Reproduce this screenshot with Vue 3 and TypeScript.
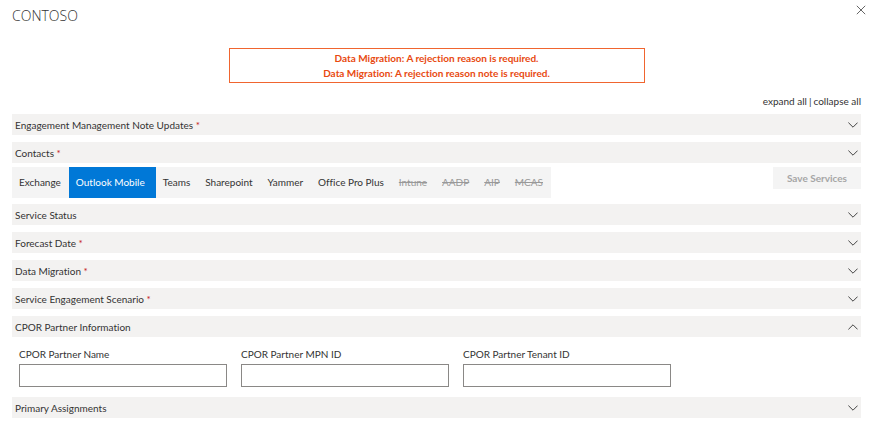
<script setup lang="ts">
import { reactive, ref } from 'vue'

interface Section {
  id: string
  title: string
  required: boolean
  open: boolean
}

interface Service {
  name: string
  disabled: boolean
}

interface Field {
  id: string
  label: string
  value: string
}

const errors: string[] = [
  'Data Migration: A rejection reason is required.',
  'Data Migration: A rejection reason note is required.',
]

const generalSections = reactive<Section[]>([
  { id: 'notes', title: 'Engagement Management Note Updates', required: true, open: false },
  { id: 'contacts', title: 'Contacts', required: true, open: false },
])

const serviceSections = reactive<Section[]>([
  { id: 'status', title: 'Service Status', required: false, open: false },
  { id: 'forecast', title: 'Forecast Date', required: true, open: false },
  { id: 'migration', title: 'Data Migration', required: true, open: false },
  { id: 'scenario', title: 'Service Engagement Scenario', required: true, open: false },
  { id: 'cpor', title: 'CPOR Partner Information', required: false, open: true },
  { id: 'assignments', title: 'Primary Assignments', required: false, open: false },
])

const services: Service[] = [
  { name: 'Exchange', disabled: false },
  { name: 'Outlook Mobile', disabled: false },
  { name: 'Teams', disabled: false },
  { name: 'Sharepoint', disabled: false },
  { name: 'Yammer', disabled: false },
  { name: 'Office Pro Plus', disabled: false },
  { name: 'Intune', disabled: true },
  { name: 'AADP', disabled: true },
  { name: 'AIP', disabled: true },
  { name: 'MCAS', disabled: true },
]

const partnerFields = reactive<Field[]>([
  { id: 'partner-name', label: 'CPOR Partner Name', value: '' },
  { id: 'partner-mpn', label: 'CPOR Partner MPN ID', value: '' },
  { id: 'partner-tenant', label: 'CPOR Partner Tenant ID', value: '' },
])

const activeService = ref('Outlook Mobile')

function setAll(open: boolean): void {
  for (const section of [...generalSections, ...serviceSections]) section.open = open
}
</script>

<template>
  <main class="panel">
    <header class="header">
      <h1 class="title">CONTOSO</h1>
      <button class="close" type="button" aria-label="Close">
        <svg viewBox="0 0 10 10" width="10" height="10" aria-hidden="true">
          <path d="M0.8 0.8 9.2 9.2M9.2 0.8 0.8 9.2" />
        </svg>
      </button>
    </header>

    <div class="alert" role="alert">
      <p v-for="error in errors" :key="error">{{ error }}</p>
    </div>

    <div class="toggles">
      <button type="button" @click="setAll(true)">expand all</button>
      <span>|</span>
      <button type="button" @click="setAll(false)">collapse all</button>
    </div>

    <div class="sections">
      <button
        v-for="section in generalSections"
        :key="section.id"
        class="bar"
        type="button"
        :aria-expanded="section.open"
        @click="section.open = !section.open"
      >
        <span>{{ section.title }} <span v-if="section.required" class="required">*</span></span>
        <svg class="chevron" :class="{ up: section.open }" viewBox="0 0 10 6" width="10" height="6" aria-hidden="true">
          <path d="M0.4 0.6 5 5.2 9.6 0.6" />
        </svg>
      </button>
    </div>

    <div class="services">
      <nav class="tabs">
        <button
          v-for="service in services"
          :key="service.name"
          class="tab"
          :class="{ active: service.name === activeService }"
          type="button"
          :disabled="service.disabled"
          @click="activeService = service.name"
        >
          {{ service.name }}
        </button>
      </nav>
      <button class="save" type="button" disabled>Save Services</button>
    </div>

    <div class="sections">
      <template v-for="section in serviceSections" :key="section.id">
        <button class="bar" type="button" :aria-expanded="section.open" @click="section.open = !section.open">
          <span>{{ section.title }} <span v-if="section.required" class="required">*</span></span>
          <svg class="chevron" :class="{ up: section.open }" viewBox="0 0 10 6" width="10" height="6" aria-hidden="true">
            <path d="M0.4 0.6 5 5.2 9.6 0.6" />
          </svg>
        </button>
        <div v-if="section.id === 'cpor' && section.open" class="fields">
          <div v-for="field in partnerFields" :key="field.id" class="field">
            <label :for="field.id">{{ field.label }}</label>
            <input :id="field.id" v-model="field.value" type="text" />
          </div>
        </div>
      </template>
    </div>
  </main>
</template>

<style>
body {
  background: #fff;
}
</style>

<style scoped>
.panel {
  padding: 0 16px 12px 12px;
  color: #333;
  font-family: Lato, 'Open Sans', sans-serif;
  font-size: 10px;
  font-variant-ligatures: none;
  line-height: 14px;
}

button {
  margin: 0;
  padding: 0;
  border: 0;
  background: none;
  color: inherit;
  font: inherit;
  font-variant-ligatures: none;
  cursor: pointer;
}

button:disabled {
  cursor: default;
}

.header {
  display: flex;
  justify-content: space-between;
  align-items: flex-start;
  height: 48px;
  margin-right: -10px;
}

.title {
  margin: 0;
  padding-top: 5px;
  font-family: 'Open Sans', sans-serif;
  font-size: 14px;
  font-weight: 300;
  line-height: 22px;
}

.close {
  display: flex;
  padding: 5px;
}

.close svg,
.chevron {
  fill: none;
  stroke: #444;
  stroke-width: 1;
}

.close svg {
  stroke: #666;
}

.alert {
  box-sizing: border-box;
  width: 49%;
  margin: 0 auto;
  padding: 2px 0 1px;
  border: 1px solid #f0652f;
  color: #e8490f;
  font-weight: 700;
  line-height: 15px;
  text-align: center;
}

.alert p {
  margin: 0;
}

.toggles {
  display: flex;
  justify-content: flex-end;
  gap: 2px;
  padding: 11px 0 6px;
}

.sections {
  display: flex;
  flex-direction: column;
  gap: 7px;
}

.bar {
  display: flex;
  justify-content: space-between;
  align-items: center;
  height: 21px;
  padding: 0 3px;
  background: #f3f2f1;
  text-align: left;
}

.required {
  color: #c4161c;
}

.chevron.up {
  transform: rotate(180deg);
}

.services {
  display: flex;
  justify-content: space-between;
  align-items: flex-start;
  padding: 4px 0 6px;
}

.tabs {
  display: flex;
  background: #f4f4f4;
}

.tab {
  height: 31px;
  padding: 0 8px 2px 7px;
}

.tab.active {
  padding-right: 11px;
  background: #0078d7;
  color: #fff;
}

.tab:disabled {
  color: #999;
  text-decoration: line-through;
}

.save {
  height: 22px;
  padding: 0 14px;
  background: #f4f4f4;
  color: #a6a6a6;
  font-weight: 700;
}

.fields {
  display: grid;
  grid-template-columns: repeat(3, minmax(0, 208px));
  gap: 14px;
  padding: 3px 7px;
}

.field {
  display: flex;
  flex-direction: column;
  gap: 3px;
}

.field input {
  box-sizing: border-box;
  width: 100%;
  height: 23px;
  margin: 0;
  padding: 0 6px;
  border: 1px solid #8a8886;
  border-radius: 0;
  background: #fff;
  color: inherit;
  font: inherit;
}
</style>
